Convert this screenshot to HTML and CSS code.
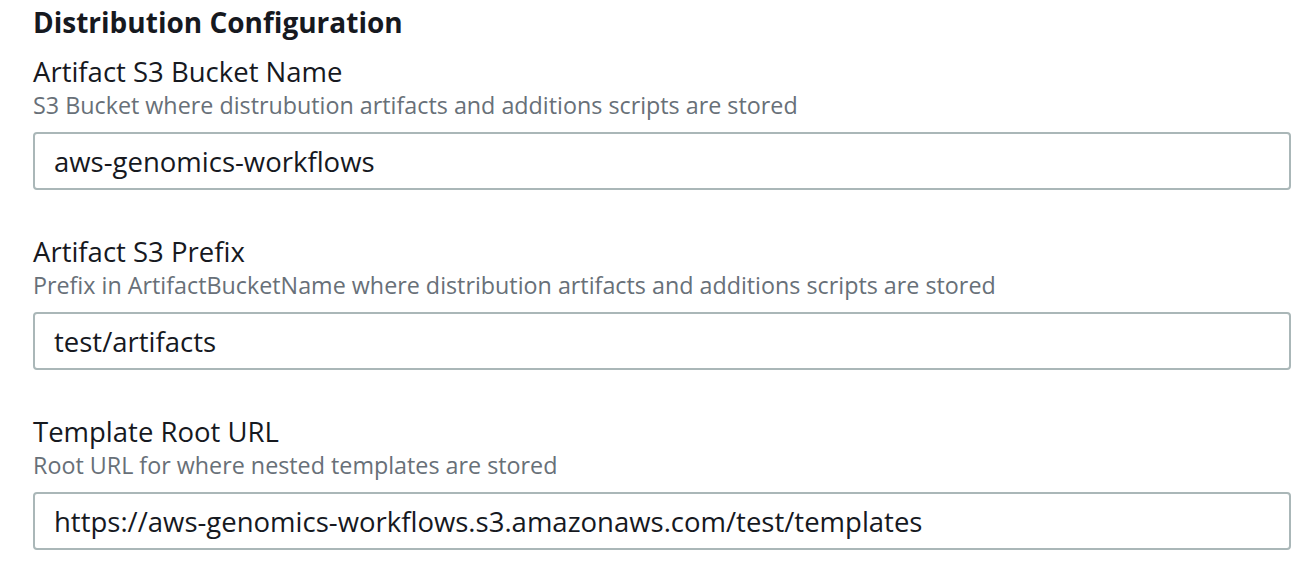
FILE: index.html
```html
<!DOCTYPE html>
<html lang="en">
<head>
<meta charset="utf-8">
<title>Distribution Configuration</title>
<link rel="stylesheet" href="styles.css">
</head>
<body>
<section class="config">
  <h2 class="config-title">Distribution Configuration</h2>
  <div class="field">
    <label class="field-label" for="bucket">Artifact S3 Bucket Name</label>
    <div class="field-desc">S3 Bucket where distrubution artifacts and additions scripts are stored</div>
    <input class="field-input" id="bucket" type="text" value="aws-genomics-workflows" readonly>
  </div>
  <div class="field">
    <label class="field-label" for="prefix">Artifact S3 Prefix</label>
    <div class="field-desc">Prefix in ArtifactBucketName where distribution artifacts and additions scripts are stored</div>
    <input class="field-input" id="prefix" type="text" value="test/artifacts" readonly>
  </div>
  <div class="field">
    <label class="field-label" for="root">Template Root URL</label>
    <div class="field-desc">Root URL for where nested templates are stored</div>
    <input class="field-input" id="root" type="text" value="https://aws-genomics-workflows.s3.amazonaws.com/test/templates" readonly>
  </div>
</section>
</body>
</html>
```

FILE: styles.css
```css
html, body {
  margin: 0;
  padding: 0;
  background: #ffffff;
}

body {
  font-family: "Open Sans", "Noto Sans", "Liberation Sans", sans-serif;
  color: #16191f;
}

.config {
  padding: 7px 17px 0 33px;
}

.config-title {
  margin: 0 0 19px 0;
  font-size: 28px;
  line-height: 30px;
  font-weight: 700;
  color: #16191f;
}

.field {
  display: flex;
  flex-direction: column;
  margin-bottom: 46px;
}

.field-label {
  display: block;
  font-size: 27.5px;
  line-height: 32px;
  font-weight: 400;
  color: #16191f;
}

.field-desc {
  margin-top: 4px;
  font-size: 23.3px;
  line-height: 26px;
  color: #687078;
}

.field-input {
  box-sizing: border-box;
  margin: 14px 0 0 0;
  width: 100%;
  height: 58px;
  padding: 0 19px;
  border: 2px solid #aab7b8;
  border-radius: 4px;
  background: #ffffff;
  font-family: "Open Sans", "Noto Sans", "Liberation Sans", sans-serif;
  font-size: 27.5px;
  color: #16191f;
  outline: none;
}
```
